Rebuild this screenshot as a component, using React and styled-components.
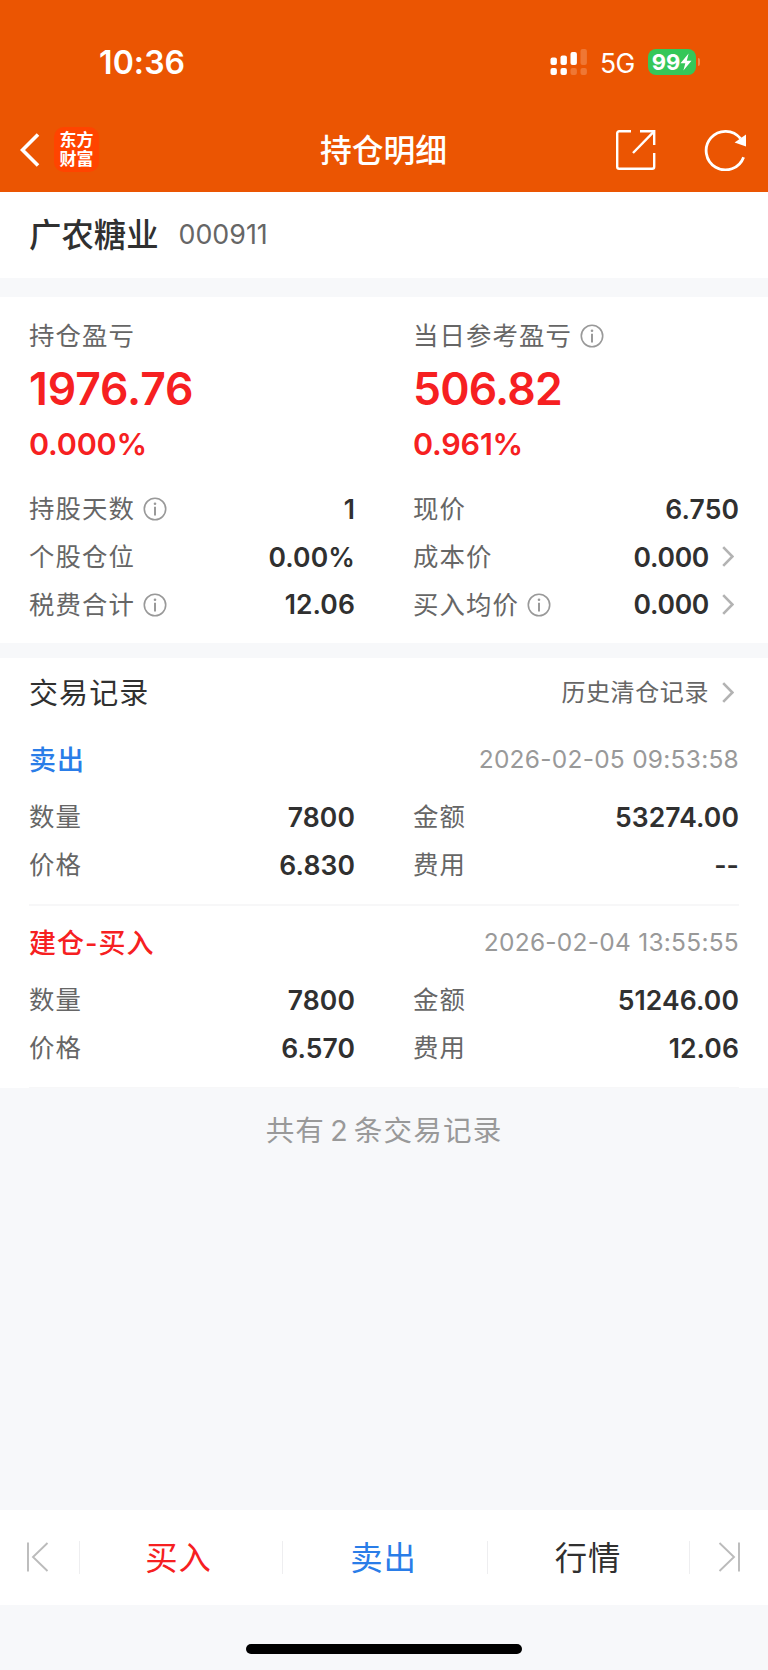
import React from "react";
import styled, { createGlobalStyle, css } from "styled-components";

const colors = {
  brand: "#eb5502",
  red: "#f62021",
  blue: "#2a7de8",
  text: "#303030",
  label: "#666666",
  muted: "#999999",
  page: "#f7f8fa",
  line: "#f7f7f8",
};

const GlobalStyle = createGlobalStyle`
  * {
    box-sizing: border-box;
  }

  body {
    margin: 0;
    background: ${colors.page};
    font-family: Inter, "Noto Sans CJK SC", sans-serif;
    color: ${colors.text};
  }
`;

const Page = styled.div`
  display: flex;
  flex-direction: column;
  width: 768px;
  height: 1670px;
  background: ${colors.page};
`;

const Header = styled.header`
  height: 192px;
  background: ${colors.brand};
  color: #fff;
`;

const StatusBar = styled.div`
  display: flex;
  align-items: center;
  height: 107px;
  padding: 17px 68px 0 99px;
`;

const Clock = styled.div`
  flex: 1;
  padding-top: 1px;
  font-size: 32px;
  font-weight: 600;
  letter-spacing: 0.1px;
`;

const Network = styled.div`
  margin: 2px 13px 0 12px;
  font-size: 26.5px;
  letter-spacing: -0.4px;
`;

const Battery = styled.div`
  display: flex;
  align-items: center;
  justify-content: center;
  width: 48px;
  height: 26px;
  border-radius: 8px;
  background: #35c759;
  font-size: 22px;
  font-weight: 700;
`;

const BatteryTip = styled.div`
  width: 2px;
  height: 8px;
  margin-left: 2px;
  border-radius: 0 2px 2px 0;
  background: #f28a50;
`;

const NavBar = styled.nav`
  display: grid;
  grid-template-columns: 1fr auto 1fr;
  align-items: center;
  height: 85px;
  padding: 0 21px 0 20px;
`;

const NavLeft = styled.div`
  display: flex;
  align-items: center;
  gap: 14px;
`;

const NavRight = styled.div`
  display: flex;
  justify-content: flex-end;
  gap: 48px;
`;

const Logo = styled.div`
  width: 45px;
  height: 45px;
  padding-top: 4px;
  border-radius: 10px;
  background: #ff4400;
  font-size: 17px;
  font-weight: 700;
  line-height: 19px;
  text-align: center;
`;

const Title = styled.h1`
  margin: 0;
  padding-top: 2px;
  font-size: 31.8px;
  font-weight: 500;
  line-height: 40px;
`;

const Panel = styled.section`
  padding: 0 29px ${({ $bottom }) => $bottom || 0}px;
  margin-bottom: ${({ $gap }) => $gap || 0}px;
  background: #fff;
`;

const StockHeader = styled(Panel)`
  display: flex;
  align-items: center;
  height: 86px;
`;

const StockName = styled.div`
  padding-bottom: 5px;
  font-size: 32.4px;
  font-weight: 500;
`;

const StockCode = styled.div`
  margin-left: 20px;
  padding-bottom: 3px;
  color: ${colors.label};
  font-size: 26.8px;
`;

const Columns = styled.div`
  display: grid;
  grid-template-columns: 326px 326px;
  column-gap: 58px;
`;

const Summary = styled.div`
  height: 188px;
  padding-top: 18px;
`;

const Label = styled.div`
  display: flex;
  align-items: center;
  gap: 8px;
  padding-top: 1px;
  color: ${colors.label};
  font-size: 25.4px;
  letter-spacing: 1.1px;
  line-height: 40px;
`;

const Profit = styled.div`
  color: ${colors.red};
  font-size: 44.5px;
  font-weight: 600;
  letter-spacing: ${({ $tracking }) => $tracking}px;
  line-height: 66px;
`;

const Ratio = styled.div`
  color: ${colors.red};
  font-size: 30.5px;
  font-weight: 600;
  letter-spacing: -0.2px;
  line-height: 44px;
`;

const Row = styled.div`
  display: flex;
  align-items: center;
  justify-content: space-between;
  height: 47.7px;
`;

const Value = styled.div`
  display: flex;
  align-items: center;
  gap: 13px;
  font-size: 26.5px;
  font-weight: 600;
  letter-spacing: 0.1px;

  ${({ $link }) =>
    $link &&
    css`
      padding-right: 5px;
      letter-spacing: -0.3px;
    `}
`;

const RecordsHeader = styled.div`
  display: flex;
  align-items: center;
  justify-content: space-between;
  height: 65px;
`;

const RecordsTitle = styled.h2`
  margin: 0;
  font-size: 29px;
  font-weight: 400;
  letter-spacing: 1.1px;
`;

const HistoryLink = styled.div`
  display: flex;
  align-items: center;
  gap: 13px;
  padding-right: 5px;
  color: ${colors.label};
  font-size: 24px;
  letter-spacing: 0.6px;

  svg {
    margin-top: 3px;
  }
`;

const Record = styled.article`
  height: 183px;
  border-bottom: 2px solid ${colors.line};

  & + & {
    height: 182px;
    border-bottom-width: 1px;
  }
`;

const RecordHead = styled.div`
  display: flex;
  align-items: center;
  justify-content: space-between;
  height: 70px;
`;

const Side = styled.div`
  color: ${({ $color }) => $color};
  font-size: 27px;
  font-weight: 500;
  letter-spacing: 1px;
`;

const Time = styled.div`
  padding-top: 2px;
  color: ${colors.muted};
  font-size: 24.5px;
  letter-spacing: 0.25px;
`;

const Total = styled.p`
  flex: 1;
  margin: 0;
  padding-top: 22px;
  color: ${colors.muted};
  font-size: 28.6px;
  letter-spacing: 1.1px;
  line-height: 42px;
  text-align: center;
  word-spacing: -4px;
`;

const TabBar = styled.footer`
  display: grid;
  grid-template-columns: 79px 203px 205px 202px 79px;
  align-items: center;
  height: 95px;
  background: #fff;
`;

const Tab = styled.div`
  display: flex;
  align-items: center;
  justify-content: center;
  height: 33px;
  padding: 0 ${({ $shift }) => $shift || 0}px 4px 0;
  border-left: ${({ $first }) => ($first ? "none" : "1px solid #eeeef0")};
  color: ${({ $color }) => $color || "#bbb"};
  font-size: 32.4px;
  letter-spacing: 0.8px;

  svg {
    margin-top: 2px;
  }
`;

const HomeArea = styled.div`
  display: flex;
  justify-content: center;
  height: 65px;
  padding-top: 39px;
`;

const HomeIndicator = styled.div`
  width: 276px;
  height: 10px;
  border-radius: 5px;
  background: #000;
`;

const SignalIcon = () => (
  <svg width="38" height="26" viewBox="0 0 38 26" fill="#fff">
    <rect x="0.5" y="8.5" width="6.4" height="7.5" rx="2" />
    <rect x="10.5" y="6.5" width="6.4" height="9.5" rx="2" />
    <rect x="20.5" y="3" width="6.4" height="13" rx="2" />
    <rect x="30.5" y="0" width="6.4" height="16" rx="2" opacity="0.2" />
    <rect x="0.5" y="19" width="6.4" height="7" rx="2" />
    <rect x="10.5" y="19" width="6.4" height="7" rx="2" />
    <rect x="20.5" y="19" width="6.4" height="7" rx="2" opacity="0.2" />
    <rect x="30.5" y="19" width="6.4" height="7" rx="2" opacity="0.2" />
  </svg>
);

const BoltIcon = () => (
  <svg width="12" height="18" viewBox="0 0 12 18" fill="#fff">
    <path d="M8.6 0.5 0.5 10.2h4.8L3.4 17.5l8.1-9.8H6.8z" />
  </svg>
);

const BackIcon = () => (
  <svg width="20" height="34" viewBox="0 0 20 34" fill="none">
    <path d="M18 1.5 2.5 17 18 32.5" stroke="#fff" strokeWidth="3.6" />
  </svg>
);

const ShareIcon = () => (
  <svg width="41" height="42" viewBox="0 0 41 42" fill="none">
    <g stroke="#fff" strokeWidth="2.4">
      <path d="M16 2.2H4.2a2 2 0 0 0-2 2v33.6a2 2 0 0 0 2 2h33a2 2 0 0 0 2-2V24" />
      <path d="M25 2.2h14.2V16" />
      <path d="M38.6 2.8 18 24" />
    </g>
  </svg>
);

const RefreshIcon = () => (
  <svg width="43" height="42" viewBox="0 0 43 42" fill="none">
    <path
      d="M39.6 28.2A19.3 19.3 0 1 1 36.6 9.6"
      stroke="#fff"
      strokeWidth="2.8"
    />
    <path d="M42 5.5v12L30.6 13.6z" fill="#fff" />
  </svg>
);

const InfoIcon = () => (
  <svg width="24" height="24" viewBox="0 0 24 24" fill="none">
    <circle cx="12" cy="12" r="10.7" stroke="#999" strokeWidth="1.6" />
    <circle cx="12" cy="6.8" r="1.3" fill="#999" />
    <path d="M12 9.8v8.6" stroke="#999" strokeWidth="2" />
  </svg>
);

const ArrowIcon = () => (
  <svg width="12" height="21" viewBox="0 0 12 21" fill="none">
    <path d="M1.2 1.2 10.4 10.5 1.2 19.8" stroke="#b3b3b3" strokeWidth="2.6" />
  </svg>
);

const PrevIcon = () => (
  <svg width="22" height="30" viewBox="0 0 22 30" fill="none">
    <path d="M1 0.5v29M20.5 1 6 15l14.5 14" stroke="#bbb" strokeWidth="1.9" />
  </svg>
);

const NextIcon = () => (
  <svg width="22" height="30" viewBox="0 0 22 30" fill="none">
    <path d="M21 0.5v29M1.5 1 16 15 1.5 29" stroke="#bbb" strokeWidth="1.9" />
  </svg>
);

const positionRows = [
  { label: "持股天数", value: "1", info: true },
  { label: "现价", value: "6.750" },
  { label: "个股仓位", value: "0.00%" },
  { label: "成本价", value: "0.000", link: true },
  { label: "税费合计", value: "12.06", info: true },
  { label: "买入均价", value: "0.000", info: true, link: true },
];

const records = [
  {
    side: "卖出",
    color: colors.blue,
    time: "2026-02-05 09:53:58",
    rows: [
      { label: "数量", value: "7800" },
      { label: "金额", value: "53274.00" },
      { label: "价格", value: "6.830" },
      { label: "费用", value: "--" },
    ],
  },
  {
    side: "建仓-买入",
    color: colors.red,
    time: "2026-02-04 13:55:55",
    rows: [
      { label: "数量", value: "7800" },
      { label: "金额", value: "51246.00" },
      { label: "价格", value: "6.570" },
      { label: "费用", value: "12.06" },
    ],
  },
];

const DataRows = ({ rows }) => (
  <Columns>
    {rows.map(({ label, value, info, link }) => (
      <Row key={label}>
        <Label>
          {label}
          {info && <InfoIcon />}
        </Label>
        <Value $link={link}>
          {value}
          {link && <ArrowIcon />}
        </Value>
      </Row>
    ))}
  </Columns>
);

const App = () => (
  <>
    <GlobalStyle />
    <Page>
      <Header>
        <StatusBar>
          <Clock>10:36</Clock>
          <SignalIcon />
          <Network>5G</Network>
          <Battery>
            99
            <BoltIcon />
          </Battery>
          <BatteryTip />
        </StatusBar>
        <NavBar>
          <NavLeft>
            <BackIcon />
            <Logo>
              东方
              <br />
              财富
            </Logo>
          </NavLeft>
          <Title>持仓明细</Title>
          <NavRight>
            <ShareIcon />
            <RefreshIcon />
          </NavRight>
        </NavBar>
      </Header>

      <StockHeader $gap={19}>
        <StockName>广农糖业</StockName>
        <StockCode>000911</StockCode>
      </StockHeader>

      <Panel $gap={15} $bottom={15}>
        <Columns>
          <Summary>
            <Label>持仓盈亏</Label>
            <Profit $tracking={-0.1}>1976.76</Profit>
            <Ratio>0.000%</Ratio>
          </Summary>
          <Summary>
            <Label>
              当日参考盈亏
              <InfoIcon />
            </Label>
            <Profit $tracking={-0.8}>506.82</Profit>
            <Ratio>0.961%</Ratio>
          </Summary>
        </Columns>
        <DataRows rows={positionRows} />
      </Panel>

      <Panel>
        <RecordsHeader>
          <RecordsTitle>交易记录</RecordsTitle>
          <HistoryLink>
            历史清仓记录
            <ArrowIcon />
          </HistoryLink>
        </RecordsHeader>
        {records.map(({ side, color, time, rows }) => (
          <Record key={time}>
            <RecordHead>
              <Side $color={color}>{side}</Side>
              <Time>{time}</Time>
            </RecordHead>
            <DataRows rows={rows} />
          </Record>
        ))}
      </Panel>

      <Total>共有 2 条交易记录</Total>

      <TabBar>
        <Tab $first $shift={3}>
          <PrevIcon />
        </Tab>
        <Tab $shift={5} $color={colors.red}>
          买入
        </Tab>
        <Tab $shift={3} $color={colors.blue}>
          卖出
        </Tab>
        <Tab $shift={1} $color={colors.text}>
          行情
        </Tab>
        <Tab>
          <NextIcon />
        </Tab>
      </TabBar>
      <HomeArea>
        <HomeIndicator />
      </HomeArea>
    </Page>
  </>
);

export default App;
